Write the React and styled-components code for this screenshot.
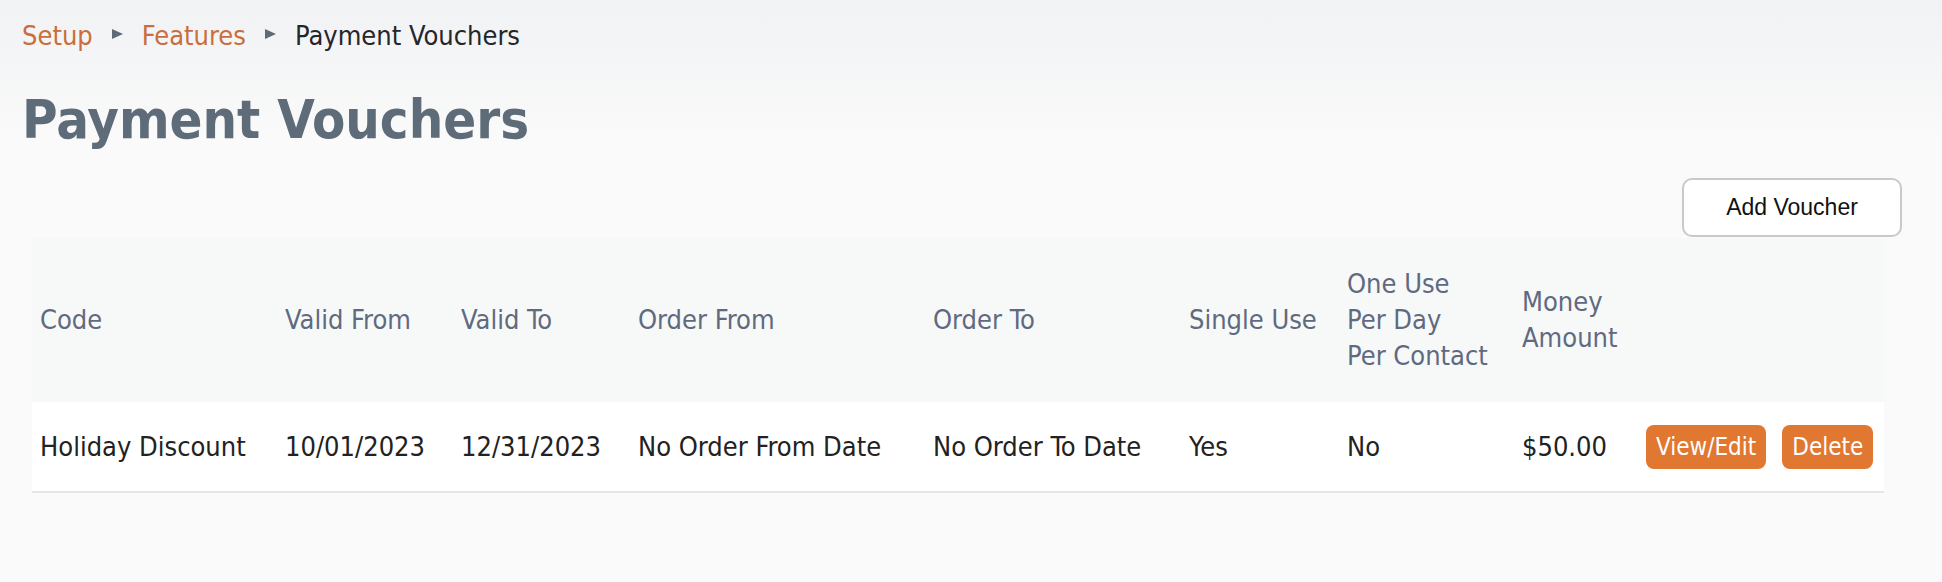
import React from "react";
import styled, { createGlobalStyle } from "styled-components";

const GlobalStyle = createGlobalStyle`
  html, body {
    margin: 0;
    padding: 0;
  }
  body {
    background: linear-gradient(#f1f2f4 0, #fafafa 140px);
    background-color: #fafafa;
    font-family: "DejaVu Sans Condensed", "DejaVu Sans", sans-serif;
    font-stretch: condensed;
  }
`;

const Page = styled.div`
  min-height: 582px;
  padding: 0 40px 0 22px;
  box-sizing: border-box;
`;

const Breadcrumbs = styled.nav`
  display: flex;
  align-items: center;
  gap: 19px;
  height: 72px;
  padding-bottom: 2px;
  font-size: 27px;
  box-sizing: border-box;
`;

const Crumb = styled.a`
  color: ${(p) => (p.$current ? "#23262b" : "#c96e3c")};
  text-decoration: none;
`;

const Arrow = styled.span`
  width: 0;
  height: 0;
  border-top: 5.5px solid transparent;
  border-bottom: 5.5px solid transparent;
  border-left: 11px solid #5e6a78;
  margin-top: -2px;
`;

const Title = styled.h1`
  margin: 16px 0 0 0;
  font-size: 54px;
  line-height: 64px;
  font-weight: 700;
  color: #5e6b79;
`;

const Toolbar = styled.div`
  display: flex;
  justify-content: flex-end;
  margin-top: 26px;
  margin-bottom: 1px;
`;

const AddButton = styled.button`
  width: 220px;
  height: 59px;
  background: #fff;
  border: 2px solid #c9c9c9;
  border-radius: 10px;
  font-family: "Liberation Sans", Arial, sans-serif;
  font-size: 23px;
  color: #111;
  cursor: pointer;
`;

const Table = styled.table`
  width: 1852px;
  margin-left: 10px;
  border-collapse: collapse;
  table-layout: fixed;
`;

const HeadCell = styled.th`
  height: 164px;
  padding: 0 8px;
  background: #f7f8f8;
  color: #5f6a80;
  font-weight: 400;
  font-size: 27px;
  line-height: 36px;
  text-align: left;
  vertical-align: middle;
`;

const Cell = styled.td`
  height: 89px;
  padding: 0 8px;
  background: #fff;
  color: #222;
  font-size: 27px;
  line-height: 36px;
  vertical-align: middle;
  border-bottom: 2px solid #e6e6e6;
  white-space: nowrap;
`;

const Actions = styled.div`
  display: flex;
  gap: 16px;
`;

const ActionButton = styled.button`
  height: 44px;
  padding: 0 10px;
  border: none;
  border-radius: 8px;
  background: #e07832;
  color: #fff;
  font-family: "DejaVu Sans Condensed", "DejaVu Sans", sans-serif;
  font-stretch: condensed;
  font-size: 24px;
  cursor: pointer;
`;

const columns = [
  { label: "Code", width: 245 },
  { label: "Valid From", width: 176 },
  { label: "Valid To", width: 177 },
  { label: "Order From", width: 295 },
  { label: "Order To", width: 256 },
  { label: "Single Use", width: 158 },
  { label: ["One Use", "Per Day", "Per Contact"], width: 175 },
  { label: ["Money", "Amount"], width: 124 },
  { label: "", width: 246 },
];

const vouchers = [
  {
    code: "Holiday Discount",
    validFrom: "10/01/2023",
    validTo: "12/31/2023",
    orderFrom: "No Order From Date",
    orderTo: "No Order To Date",
    singleUse: "Yes",
    oneUsePerDay: "No",
    amount: "$50.00",
  },
];

const App = () => {
  return (
    <>
      <GlobalStyle />
      <Page>
        <Breadcrumbs>
          <Crumb href="#">Setup</Crumb>
          <Arrow />
          <Crumb href="#">Features</Crumb>
          <Arrow />
          <Crumb $current>Payment Vouchers</Crumb>
        </Breadcrumbs>
        <Title>Payment Vouchers</Title>
        <Toolbar>
          <AddButton>Add Voucher</AddButton>
        </Toolbar>
        <Table>
          <colgroup>
            {columns.map((c, i) => (
              <col key={i} style={{ width: c.width }} />
            ))}
          </colgroup>
          <thead>
            <tr>
              {columns.map((c, i) => (
                <HeadCell key={i}>
                  {Array.isArray(c.label)
                    ? c.label.map((line, j) => (
                        <React.Fragment key={j}>
                          {j > 0 && <br />}
                          {line}
                        </React.Fragment>
                      ))
                    : c.label}
                </HeadCell>
              ))}
            </tr>
          </thead>
          <tbody>
            {vouchers.map((v) => (
              <tr key={v.code}>
                <Cell>{v.code}</Cell>
                <Cell>{v.validFrom}</Cell>
                <Cell>{v.validTo}</Cell>
                <Cell>{v.orderFrom}</Cell>
                <Cell>{v.orderTo}</Cell>
                <Cell>{v.singleUse}</Cell>
                <Cell>{v.oneUsePerDay}</Cell>
                <Cell>{v.amount}</Cell>
                <Cell>
                  <Actions>
                    <ActionButton>View/Edit</ActionButton>
                    <ActionButton>Delete</ActionButton>
                  </Actions>
                </Cell>
              </tr>
            ))}
          </tbody>
        </Table>
      </Page>
    </>
  );
};

export default App;
